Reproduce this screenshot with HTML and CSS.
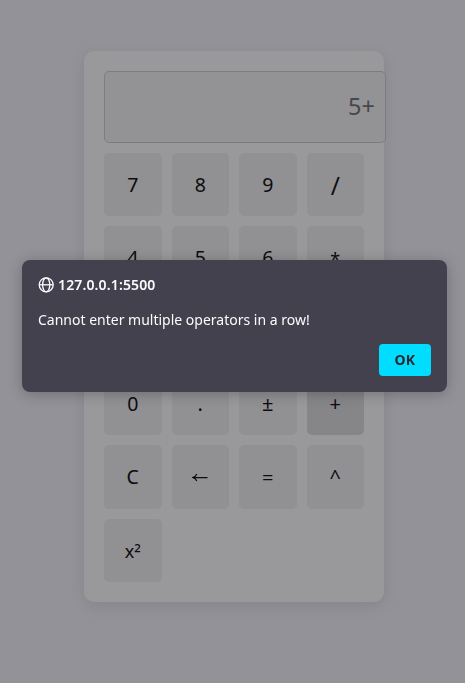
FILE: index.html
```html
<!DOCTYPE html>
<html lang="en">
<head>
<meta charset="utf-8">
<title>Calculator</title>
<link rel="stylesheet" href="styles.css">
</head>
<body>
<main class="calculator">
  <div class="display"><span class="value">5+</span></div>
  <div class="keys">
    <button><span class="digit">7</span></button><button><span class="digit">8</span></button><button><span class="digit">9</span></button><button><span class="slash">/</span></button>
    <button><span class="digit">4</span></button><button><span class="digit">5</span></button><button><span class="digit">6</span></button><button><span class="star">*</span></button>
    <button aria-label="1"></button><button aria-label="2"></button><button aria-label="3"></button><button aria-label="-"></button>
    <button><span class="digit">0</span></button><button>.</button><button><span class="sign">±</span></button><button class="active"><span class="sign">+</span></button>
    <button><span class="digit">C</span></button><button aria-label="Backspace"><svg class="arrow" width="16" height="10" viewBox="0 0 16 10" fill="none" stroke="#000" stroke-width="1.25"><path d="M15.5 5.5H1M4.8 2C4.1 3.7 2.8 4.8.8 5.5c2 .7 3.3 1.8 4 3.5"/></svg></button><button><span class="equals">=</span></button><button><span class="caret">^</span></button>
    <button><span class="square">x<span class="power">²</span></span></button>
  </div>
</main>
<div class="overlay">
  <section class="dialog" role="alertdialog">
    <header class="origin">
      <svg width="16" height="16" viewBox="0 0 16 16" fill="none" stroke="#fbfbfe" stroke-width="1.3"><circle cx="8.2" cy="7.8" r="7"/><ellipse cx="8.2" cy="7.8" rx="3.6" ry="7"/><path d="M1.3 7.8h13.8"/></svg>
      <span class="host">127.0.0.1:5500</span>
    </header>
    <p class="message"><span>Cannot enter multiple operators in a row!</span></p>
    <footer><button class="ok">OK</button></footer>
  </section>
</div>
</body>
</html>
```
FILE: styles.css
```css
* { box-sizing: border-box; }
body {
  margin: 0;
  height: 683px;
  overflow: hidden;
  display: flex;
  justify-content: center;
  padding: 51px 0 81px 3px;
  background: #f4f4f9;
  font-family: "Noto Sans", sans-serif;
}
.calculator {
  width: 300px;
  height: 551px;
  padding: 20px;
  display: flex;
  flex-direction: column;
  gap: 10px;
  background: #fff;
  border-radius: 10px;
  box-shadow: 0 4px 15px rgba(0, 0, 0, .1);
}
.display {
  width: 282px;
  height: 72px;
  flex: none;
  padding: 0 10px 3px;
  display: flex;
  align-items: center;
  justify-content: flex-end;
  border: 1px solid #ccc;
  border-radius: 5px;
  background: #f5f5f5;
  color: #6c6c6c;
  font-size: 23.5px;
}
.keys {
  flex: 1;
  display: grid;
  grid-template-columns: repeat(4, 1fr);
  grid-template-rows: 63px 63px 63px 63px 64px 63px;
  gap: 10px;
}
.keys button {
  min-width: 0;
  padding: 0;
  display: flex;
  align-items: center;
  justify-content: center;
  border: 0;
  border-radius: 5px;
  background: #f0f0f0;
  color: #000;
  font: 20px/24px "Noto Sans", sans-serif;
}
.keys .active { background: #ddd; }
.digit { font-size: 19.5px; }
.sign { font-size: 20px; }
.equals { font-size: 20px; padding-top: 2px; }
.slash { font: 25px/26px "Open Sans", "Noto Sans", sans-serif; padding-top: 1px; }
.star { font-size: 18px; padding-top: 2px; }
.square { font-size: 18px; padding-top: 1px; }
.power { display: inline-block; font-size: 19px; transform: translateY(2px); }
.overlay {
  position: fixed;
  inset: 0;
  padding: 260px 18px 0 22px;
  background: rgba(28, 27, 34, .45);
}
.dialog {
  height: 132px;
  padding: 16px;
  border-radius: 8px;
  background: #42414d;
  color: #fbfbfe;
  box-shadow: 0 2px 14px rgba(0, 0, 0, .25);
}
.origin {
  height: 17px;
  display: flex;
  align-items: center;
  gap: 4px;
  font-size: 14px;
  font-weight: 600;
}
.host { letter-spacing: .14px; }
.message {
  margin: 17px 0 0;
  height: 20px;
  font-size: 14px;
  line-height: 20px;
  white-space: nowrap;
}
footer {
  margin-top: 14px;
  display: flex;
  justify-content: flex-end;
}
.ok {
  width: 52px;
  height: 32px;
  padding: 0 0 2px;
  border: 0;
  border-radius: 4px;
  background: #00ddff;
  color: #2b2a33;
  font: 700 14px "Noto Sans", sans-serif;
  letter-spacing: .3px;
}
```
